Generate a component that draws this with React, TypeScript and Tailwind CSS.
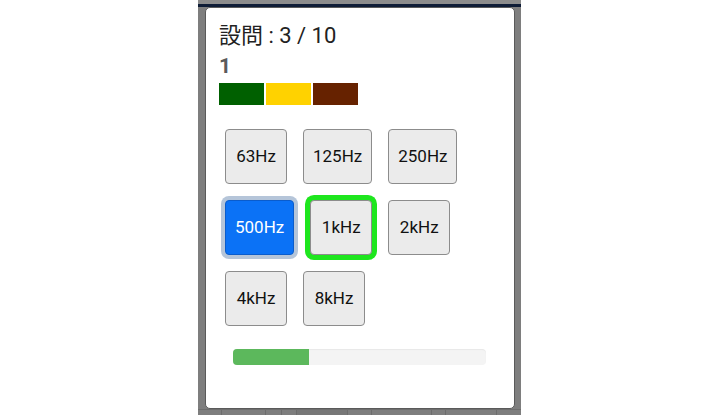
import React from "react";

const font = { fontFamily: "Roboto, 'Noto Sans CJK JP', sans-serif" };

const bands = ["63Hz", "125Hz", "250Hz", "500Hz", "1kHz", "2kHz", "4kHz", "8kHz"];
const selected = "500Hz";
const answer = "1kHz";

const BandButton = ({ label }: { label: string }) => {
  const isSelected = label === selected;
  const isAnswer = label === answer;
  return (
    <button
      className={`h-[55px] min-w-[62px] px-[9px] rounded-[4px] border text-[17px] leading-none ${
        isSelected
          ? "bg-[#0b72f6] border-[#0a5ccc] text-white shadow-[0_0_0_4px_#b5c5d9]"
          : "bg-[#ebebeb] border-[#8c8c8c] text-[#111]"
      } ${isAnswer ? "shadow-[0_0_0_5px_#1ee61e]" : ""}`}
    >
      {label}
    </button>
  );
};

export default function App() {
  return (
    <div className="h-[415px] w-[720px] bg-white overflow-hidden" style={font}>
      <div className="ml-[198px] w-[323px] h-[415px] bg-[#7e7e7e] flex flex-col">
        <div className="h-[4px] bg-[#8c8c8c]" />
        <div className="h-[3px] bg-[#0e1c36]" />

        {/* Modal */}
        <div className="ml-[7px] w-[310px] h-[402px] bg-white rounded-[5px] border border-[#5a5a5a] pl-[13px] pt-[14px]">
          <h2 className="text-[22px] leading-[28px] text-[#222] font-normal">設問 : 3 / 10</h2>
          <div className="mt-[4px] text-[21px] leading-[24px] font-bold text-[#5a5a5a]">1</div>
          <div className="mt-[5px] flex gap-[2px]">
            <div className="w-[45px] h-[22px] bg-[#006000]" />
            <div className="w-[45px] h-[22px] bg-[#ffd200]" />
            <div className="w-[45px] h-[22px] bg-[#662200]" />
          </div>

          <div className="mt-[24px] ml-[6px] w-[282px] flex flex-wrap gap-4">
            {bands.map((b) => (
              <BandButton key={b} label={b} />
            ))}
          </div>

          <div className="mt-[23px] ml-[14px] w-[253px] h-[16px] rounded-[4px] bg-[#f4f4f4] shadow-[inset_0_1px_1px_rgba(0,0,0,0.05)] overflow-hidden">
            <div className="h-full bg-[#5cb85c]" style={{ width: "30%" }} />
          </div>
        </div>

        {/* table behind the overlay */}
        <div className="flex-1 flex border-t border-[#6e6e6e]">
          <div className="w-[24px] border-r border-[#6c6c6c]" />
          <div className="w-[44px] border-r border-[#6c6c6c]" />
          <div className="w-[16px] border-r border-[#6c6c6c]" />
          <div className="w-[15px] border-r border-[#6c6c6c]" />
          <div className="w-[51px] border-r border-[#6c6c6c] bg-[#777]" />
          <div className="w-[24px] border-r border-[#6c6c6c]" />
          <div className="w-[60px] border-r border-[#6c6c6c]" />
          <div className="w-[14px] border-r border-[#6c6c6c]" />
          <div className="w-[51px] border-r border-[#6c6c6c]" />
          <div className="flex-1" />
        </div>
      </div>
    </div>
  );
}
